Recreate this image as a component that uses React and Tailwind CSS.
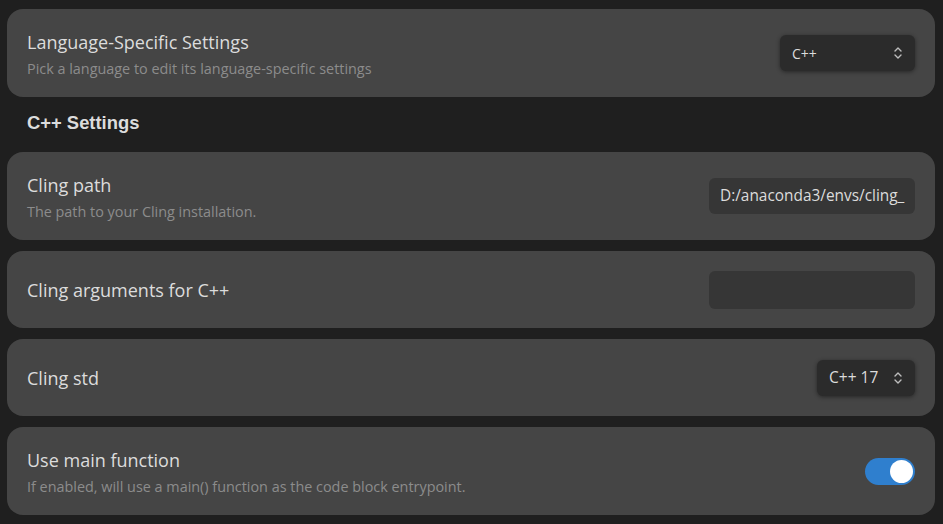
import { useState } from 'react'

const font = { fontFamily: '"Open Sans", "Noto Sans", sans-serif' }

function Chevrons() {
  return (
    <svg width="10" height="14" viewBox="0 0 10 14" fill="none" stroke="#bdbdbd" strokeWidth="1.4" strokeLinecap="round" strokeLinejoin="round">
      <path d="M2 5 L5 2 L8 5" />
      <path d="M2 9 L5 12 L8 9" />
    </svg>
  )
}

function Select({ value, className }) {
  return (
    <div className={`flex h-9 items-center justify-between rounded-md bg-[#2b2b2b] pr-3 text-[#dcdcdc] shadow-[0_1px_4px_rgba(0,0,0,0.45)] ${className}`}>
      <span>{value}</span>
      <Chevrons />
    </div>
  )
}

function Card({ title, desc, children, tall }) {
  return (
    <div className={`flex items-center justify-between rounded-2xl bg-[#454545] pl-5 pr-5 ${tall ? 'h-[88px]' : 'h-[77px]'}`}>
      <div className={`flex flex-col ${desc ? 'pt-[3px]' : 'pt-[1px]'}`}>
        <div className="text-[18px] leading-6 text-[#dcdcdc]">{title}</div>
        {desc && <div className="mt-[5px] text-[14.4px] leading-5 text-[#8c8c8c]">{desc}</div>}
      </div>
      {children}
    </div>
  )
}

export default function App() {
  const [useMain, setUseMain] = useState(true)

  return (
    <div className="min-h-screen bg-[#1f1f1f] pt-[9px] pl-[7px] pr-[8px]" style={font}>
      <div className="flex flex-col">
        <Card tall title="Language-Specific Settings" desc="Pick a language to edit its language-specific settings">
          <Select value="C++" className="w-[135px] pl-3 text-[14px]" />
        </Card>

        <h2 className="h-[55px] pl-5 pt-[12px] text-[18.4px] font-bold text-[#dcdcdc]" style={{ fontFamily: '"Liberation Sans", Arial, sans-serif' }}>
          C++ Settings
        </h2>

        <div className="flex flex-col gap-[11px]">
          <Card tall title="Cling path" desc="The path to your Cling installation.">
            <div className="flex h-9 w-[206px] items-center overflow-hidden whitespace-nowrap rounded-md bg-[#363636] px-[11px] text-[15.4px] text-[#dcdcdc]">
              D:/anaconda3/envs/cling_
            </div>
          </Card>

          <Card title="Cling arguments for C++">
            <div className="h-[38px] w-[206px] rounded-md bg-[#363636]" />
          </Card>

          <Card title="Cling std">
            <Select value="C++ 17" className="w-[98px] pl-3 text-[15.5px]" />
          </Card>

          <Card tall title="Use main function" desc="If enabled, will use a main() function as the code block entrypoint.">
            <button
              onClick={() => setUseMain(!useMain)}
              className={`flex h-[27px] w-[50px] items-center rounded-full px-[2px] ${useMain ? 'justify-end bg-[#2f7fce]' : 'justify-start bg-[#5a5a5a]'}`}
            >
              <span className="h-[23px] w-[23px] rounded-full bg-white" />
            </button>
          </Card>
        </div>
      </div>
    </div>
  )
}
